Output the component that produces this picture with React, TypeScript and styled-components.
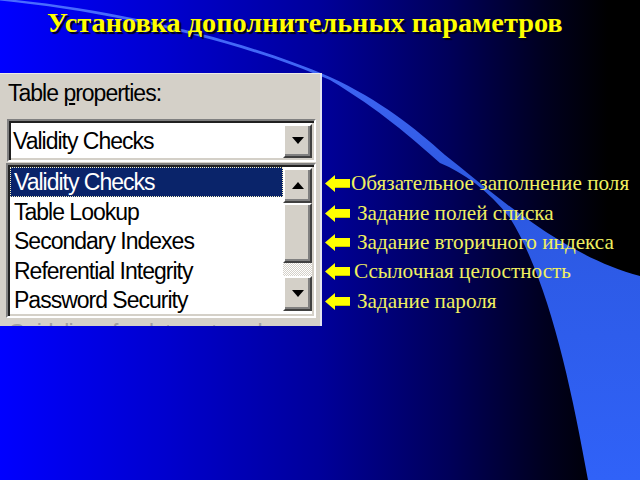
import React from "react";
import styled, { createGlobalStyle } from "styled-components";

const GlobalStyle = createGlobalStyle`
  html, body {
    margin: 0;
    padding: 0;
    background: #000;
  }
  #root {
    width: 640px;
    height: 480px;
    overflow: hidden;
  }
`;

const notes = [
  { text: "Обязательное заполнение поля", gap: 1 },
  { text: "Задание полей списка", gap: 7 },
  { text: "Задание вторичного индекса", gap: 7 },
  { text: "Ссылочная целостность", gap: 4 },
  { text: "Задание пароля", gap: 7 },
];

const items = [
  "Validity Checks",
  "Table Lookup",
  "Secondary Indexes",
  "Referential Integrity",
  "Password Security",
];

function Swoosh() {
  return (
    <SwooshSvg viewBox="0 0 640 480" width="640" height="480">
      <defs>
        <linearGradient id="band" x1="0" y1="0" x2="0" y2="1">
          <stop offset="0" stopColor="#4a6cff" />
          <stop offset="0.4" stopColor="#2c58e0" />
          <stop offset="1" stopColor="#3062f8" />
        </linearGradient>
      </defs>
      <path
        d="M -5 -2 C 110 8, 240 38, 330 77 C 380 100, 415 128, 445 155 C 490 190, 560 255, 640 276 L 640 480 L 588 480 C 570 380, 548 280, 510 218 C 488 190, 464 173, 440 163 C 412 138, 380 110, 330 80 C 240 41, 110 11, -5 0 Z"
        fill="url(#band)"
      />
    </SwooshSvg>
  );
}

function LeftArrow() {
  return (
    <ArrowSvg viewBox="0 0 25 17" width="25" height="17">
      <polygon points="0,8.5 10,0 10,4 25,4 25,13 10,13 10,17" fill="#ffff00" />
      <polygon points="10,13 25,13 25,12 10,12" fill="#c8c800" />
    </ArrowSvg>
  );
}

function Triangle({ up }: { up?: boolean }) {
  return (
    <svg width="12" height="7" viewBox="0 0 12 7">
      <polygon points={up ? "6,0 12,7 0,7" : "0,0 12,0 6,7"} fill="#000" />
    </svg>
  );
}

export default function App() {
  return (
    <>
      <GlobalStyle />
      <Slide>
        <Swoosh />
        <Header>
          <Title>Установка дополнительных параметров</Title>
        </Header>
        <Body>
          <Dialog>
            <Label>
              Table <u>p</u>roperties:
            </Label>
            <Combo>
              <ComboText>Validity Checks</ComboText>
              <RaisedButton $height={34}>
                <Triangle />
              </RaisedButton>
            </Combo>
            <ListBox>
              <Items>
                {items.map((item, i) => (
                  <Item key={item} $selected={i === 0}>
                    {item}
                  </Item>
                ))}
              </Items>
              <ScrollBar>
                <RaisedButton $height={35}>
                  <Triangle up />
                </RaisedButton>
                <RaisedButton $height={60} />
                <Track />
                <RaisedButton $height={35}>
                  <Triangle />
                </RaisedButton>
              </ScrollBar>
            </ListBox>
            <Clipped>Guidelines for data entry rules</Clipped>
          </Dialog>
          <Notes>
            {notes.map((n) => (
              <NoteRow key={n.text} $gap={n.gap}>
                <LeftArrow />
                <NoteText>{n.text}</NoteText>
              </NoteRow>
            ))}
          </Notes>
        </Body>
      </Slide>
    </>
  );
}

const Slide = styled.div`
  position: relative;
  width: 640px;
  height: 480px;
  overflow: hidden;
  background: linear-gradient(
    90deg,
    #0000ff 0%,
    #0000d0 25%,
    #00009a 50%,
    #00005a 70%,
    #000020 85%,
    #000000 95%
  );
`;

const SwooshSvg = styled.svg`
  position: absolute;
  left: 0;
  top: 0;
  z-index: 0;
`;

const Header = styled.header`
  position: relative;
  z-index: 1;
  height: 73px;
  padding-left: 47px;
  box-sizing: border-box;
`;

const Title = styled.h1`
  margin: 0;
  padding-top: 5px;
  font-family: "Liberation Serif", "Times New Roman", serif;
  font-weight: bold;
  font-size: 28.3px;
  line-height: 36px;
  color: #ffff00;
  text-shadow: 2px 2px 1px #000018;
  white-space: nowrap;
`;

const Body = styled.main`
  position: relative;
  z-index: 1;
  display: flex;
  align-items: flex-start;
`;

const Dialog = styled.section`
  width: 322px;
  height: 253px;
  box-sizing: border-box;
  background: #d4d0c8;
  border-top: 1px solid #ecebe8;
  border-right: 2px solid #e4e4f0;
  padding: 6px 6px 0 6px;
  overflow: hidden;
  font-family: "Liberation Sans", Arial, sans-serif;
  font-size: 23px;
  letter-spacing: -1px;
  color: #000;
`;

const Label = styled.div`
  height: 26px;
  line-height: 26px;
  padding-left: 2px;
  margin-bottom: 13px;
  white-space: nowrap;

  u {
    text-decoration-thickness: 2px;
    text-underline-offset: 2px;
  }
`;

const Combo = styled.div`
  display: flex;
  align-items: center;
  justify-content: space-between;
  width: 309px;
  height: 43px;
  margin-left: 1px;
  box-sizing: border-box;
  background: #fff;
  border-top: 2px solid #808080;
  border-left: 2px solid #808080;
  border-bottom: 2px solid #fff;
  border-right: 2px solid #fff;
  box-shadow: inset 2px 2px 0 #202020, inset -2px -2px 0 #d4d0c8;
  padding: 0 2px 0 4px;
`;

const ComboText = styled.span`
  white-space: nowrap;
  line-height: 30px;
`;

const RaisedButton = styled.div<{ $height?: number }>`
  display: flex;
  align-items: center;
  justify-content: center;
  width: 29px;
  height: ${(p) => p.$height ?? 30}px;
  box-sizing: border-box;
  flex: none;
  background: #d4d0c8;
  border-top: 2px solid #ffffff;
  border-left: 2px solid #ffffff;
  border-right: 2px solid #404040;
  border-bottom: 2px solid #404040;
  box-shadow: inset -2px -2px 0 #808080;
`;

const ListBox = styled.div`
  display: flex;
  width: 310px;
  height: 155px;
  margin-top: 1px;
  box-sizing: border-box;
  background: #fff;
  border-top: 2px solid #808080;
  border-left: 2px solid #808080;
  border-bottom: 2px solid #fff;
  border-right: 2px solid #fff;
  box-shadow: inset 2px 2px 0 #202020, inset -2px -2px 0 #d4d0c8;
  padding: 2px 2px 1px 2px;
`;

const Items = styled.ul`
  flex: 1;
  margin: 0;
  padding: 0;
  list-style: none;
  overflow: hidden;
`;

const Item = styled.li<{ $selected?: boolean }>`
  height: 29.6px;
  line-height: 28px;
  box-sizing: border-box;
  padding-left: 3px;
  white-space: nowrap;
  background: ${(p) => (p.$selected ? "#0a246a" : "transparent")};
  color: ${(p) => (p.$selected ? "#fff" : "#000")};
  border: 1px dotted ${(p) => (p.$selected ? "#f4f0c0" : "transparent")};
`;

const ScrollBar = styled.div`
  display: flex;
  flex-direction: column;
  width: 29px;
  flex: none;
  padding-top: 1px;
`;

const Track = styled.div`
  height: 13px;
  background-color: #eeeeee;
  background-image: repeating-conic-gradient(#d4d0c8 0 25%, #ffffff 0 50%);
  background-size: 2px 2px;
`;

const Clipped = styled.div`
  margin-top: 2px;
  padding-left: 2px;
  color: #a0a0a0;
  white-space: nowrap;
  line-height: 26px;
`;

const Notes = styled.section`
  display: flex;
  flex-direction: column;
  padding-top: 96px;
`;

const NoteRow = styled.div<{ $gap: number }>`
  display: flex;
  align-items: center;
  gap: ${(p) => p.$gap}px;
  height: 29.4px;
  padding-left: 3px;
`;

const ArrowSvg = styled.svg`
  flex: none;
`;

const NoteText = styled.span`
  font-family: "Liberation Serif", "Times New Roman", serif;
  font-size: 21.2px;
  color: #f0f060;
  white-space: nowrap;
`;
